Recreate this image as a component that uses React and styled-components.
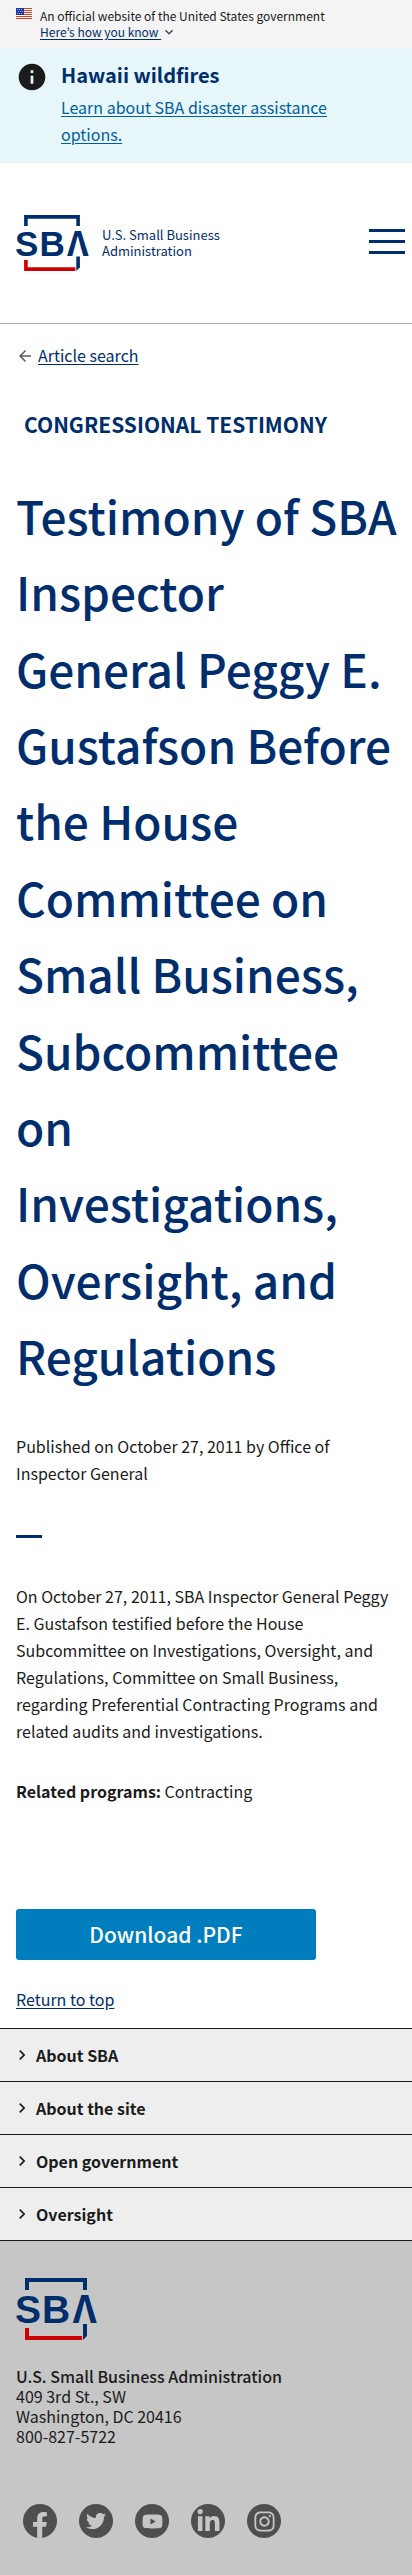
import React from "react";
import styled, { createGlobalStyle } from "styled-components";
import { FaFacebookF, FaTwitter, FaLinkedinIn, FaInstagram, FaYoutube } from "react-icons/fa";

const navy = "#002e6d";
const ink = "#1b1b1b";

const GlobalStyle = createGlobalStyle`
  *, *::before, *::after { box-sizing: border-box; }
  body {
    margin: 0;
    background: #fff;
    color: ${ink};
    font-family: "Noto Sans CJK KR", "Noto Sans", sans-serif;
    font-size: 16px;
    line-height: 27px;
  }
  h1, h2, p, ul, address { margin: 0; padding: 0; }
  button { font-family: inherit; }
  svg { display: block; flex: none; }
`;

const TextLink = styled.a`
  color: ${(p) => p.$color || navy};
  text-decoration: underline;
  text-underline-offset: 2px;
`;

const GovBanner = styled.section`
  display: flex;
  gap: 8px;
  padding: 8px 16px;
  background: #f4f4f4;
  font-size: 12px;
  line-height: 16px;
`;

const BannerButton = styled.button`
  display: flex;
  align-items: center;
  padding: 0;
  border: 0;
  background: none;
  color: ${navy};
  font-size: 12px;
  line-height: 16px;
  cursor: pointer;
  span { text-decoration: underline; text-underline-offset: 2px; }
`;

const Alert = styled.section`
  display: flex;
  gap: 13px;
  padding: 13px 16px;
  background: #e7f6f8;
`;

const AlertBody = styled.div`
  padding-bottom: 2px;
  max-width: 300px;
`;

const AlertTitle = styled.h2`
  color: ${navy};
  font-size: 20px;
  line-height: 27px;
  font-weight: 700;
  margin-bottom: 6px;
`;

const Header = styled.header`
  display: flex;
  align-items: center;
  justify-content: space-between;
  height: 161px;
  padding: 0 7px 0 16px;
  border-bottom: 1px solid #a9aeb1;
`;

const Brand = styled.a`
  display: flex;
  align-items: center;
  gap: 14px;
  color: ${navy};
  font-size: 13px;
  line-height: 16px;
  text-decoration: none;
`;

const MenuButton = styled.button`
  display: flex;
  flex-direction: column;
  gap: 8px;
  width: 36px;
  padding: 0 0 4px;
  border: 0;
  background: none;
  cursor: pointer;
`;

const MenuBar = styled.span`
  height: 3px;
  background: ${navy};
`;

const Main = styled.main`
  padding: 18px 16px 15px;
`;

const BackLink = styled.nav`
  display: flex;
  align-items: center;
  gap: 4px;
`;

const Kicker = styled.h2`
  margin: 39px 0 0;
  padding: 0 8px;
  color: ${navy};
  font-size: 21px;
  line-height: 32px;
  font-weight: 700;
  text-transform: uppercase;
`;

const Title = styled.h1`
  margin: 37px -8px 40px 0;
  color: ${navy};
  font-size: 46px;
  line-height: 1.66;
  font-weight: 500;
`;

const Divider = styled.hr`
  width: 26px;
  height: 3px;
  margin: 48px 0 45px;
  border: 0;
  background: ${navy};
`;

const Related = styled.p`
  margin: 33px 0 104px;
  strong { font-weight: 700; }
`;

const DownloadLink = styled.a`
  display: block;
  max-width: 300px;
  margin-bottom: 26px;
  padding: 12px;
  border-radius: 3px;
  background: #007dbc;
  color: #fff;
  font-size: 21px;
  line-height: 27px;
  font-weight: 500;
  text-align: center;
  text-decoration: none;
`;

const FooterSection = styled.button`
  display: flex;
  align-items: center;
  gap: 4px;
  width: 100%;
  padding: 12px;
  border: 0;
  border-top: 1px solid ${ink};
  background: #eee;
  color: ${ink};
  font-size: 16px;
  line-height: 28px;
  font-weight: 700;
  text-align: left;
  cursor: pointer;
`;

const FooterInfo = styled.section`
  padding: 37px 16px;
  border-top: 1px solid ${ink};
  background: #c6c6c6;
  address { margin: 26px 0 58px; font-style: normal; line-height: 20px; }
  strong { font-weight: 500; display: block; }
`;

const Socials = styled.ul`
  display: flex;
  gap: 22px;
  padding: 0 7px;
  list-style: none;
`;

const SocialLink = styled.a`
  display: flex;
  align-items: center;
  justify-content: center;
  width: 34px;
  height: 34px;
  border-radius: 50%;
  overflow: hidden;
  background: #4f4f4f;
  color: #c6c6c6;
  svg { margin-top: ${(p) => p.$drop || 0}px; }
`;

const LogoArt = styled.svg`
  overflow: visible;
`;

const Icon = ({ size, color, d }) => (
  <svg width={size} height={size} viewBox="0 0 24 24" fill={color} aria-hidden="true">
    <path d={d} />
  </svg>
);

const Flag = () => (
  <svg width="16" height="11" viewBox="0 0 16 11" aria-label="U.S. flag" role="img">
    <rect width="16" height="11" fill="#fff" />
    {[0, 2, 4, 6, 8, 10].map((y) => (
      <rect key={y} y={y} width="16" height="1" fill="#db3e1f" />
    ))}
    <rect width="8" height="7" fill="#1e33b1" />
    {[1, 3, 5].map((y) => [1, 3, 5].map((x) => (
      <rect key={`${x}-${y}`} x={x + (y === 3 ? 1 : 0)} y={y} width="1" height="1" fill="#a5afdc" />
    )))}
  </svg>
);

const Logo = ({ width, height }) => (
  <LogoArt width={width} height={height} viewBox="0 0 80 62" role="img" aria-label="SBA">
    <path d="M11 12V2H69V12" fill="none" stroke={navy} strokeWidth="4" />
    <path d="M11 50V60H66" fill="none" stroke="#cc0000" strokeWidth="4" />
    <path d="M67 46H71V58L67 62Z" fill={navy} />
    <g fill={navy} fontFamily="Liberation Sans, sans-serif" fontWeight="700" fontSize="39">
      <text x="-1" y="45">S</text>
      <text x="26" y="45">B</text>
      <text x="57" y="45" fontFamily="Noto Sans CJK KR, sans-serif" fontSize="38">Λ</text>
    </g>
  </LogoArt>
);

const sections = ["About SBA", "About the site", "Open government", "Oversight"];

const socials = [
  { name: "Facebook", Glyph: FaFacebookF, size: 26, drop: 8 },
  { name: "Twitter", Glyph: FaTwitter, size: 20 },
  { name: "YouTube", Glyph: FaYoutube, size: 21 },
  { name: "LinkedIn", Glyph: FaLinkedinIn, size: 25 },
  { name: "Instagram", Glyph: FaInstagram, size: 23 },
];

export default function App() {
  return (
    <>
      <GlobalStyle />
      <GovBanner>
        <Flag />
        <div>
          <p>An official website of the United States government</p>
          <BannerButton type="button">
            <span>Here’s how you know&nbsp;</span>
            <Icon size={16} color="#3d4551" d="M16.59 8.59 12 13.17 7.41 8.59 6 10l6 6 6-6z" />
          </BannerButton>
        </div>
      </GovBanner>
      <Alert>
        <Icon size={32} color={ink} d="M12 2C6.48 2 2 6.48 2 12s4.48 10 10 10 10-4.48 10-10S17.52 2 12 2zm1 15h-2v-6h2v6zm0-8h-2V7h2v2z" />
        <AlertBody>
          <AlertTitle>Hawaii wildfires</AlertTitle>
          <TextLink href="#disaster" $color="#005ea2">Learn about SBA disaster assistance options.</TextLink>
        </AlertBody>
      </Alert>
      <Header>
        <Brand href="#home">
          <Logo width={72} height={56} />
          <span>U.S. Small Business<br />Administration</span>
        </Brand>
        <MenuButton type="button" aria-label="Menu">
          <MenuBar /><MenuBar /><MenuBar />
        </MenuButton>
      </Header>
      <Main id="top">
        <BackLink>
          <Icon size={18} color="#565c65" d="M20 11H7.83l5.59-5.59L12 4l-8 8 8 8 1.41-1.41L7.83 13H20v-2z" />
          <TextLink href="#articles">Article search</TextLink>
        </BackLink>
        <Kicker>Congressional Testimony</Kicker>
        <Title>
          Testimony of SBA Inspector General Peggy E. Gustafson Before the House Committee on
          Small Business, Subcommittee on Investigations, Oversight, and Regulations
        </Title>
        <p>Published on October 27, 2011 by Office of Inspector General</p>
        <Divider />
        <p>
          On October 27, 2011, SBA Inspector General Peggy E. Gustafson testified before the House
          Subcommittee on Investigations, Oversight, and Regulations, Committee on Small Business,
          regarding Preferential Contracting Programs and related audits and investigations.
        </p>
        <Related><strong>Related programs:</strong> Contracting</Related>
        <DownloadLink href="#pdf">Download .PDF</DownloadLink>
        <TextLink href="#top">Return to top</TextLink>
      </Main>
      <footer>
        <nav>
          {sections.map((label) => (
            <FooterSection type="button" key={label}>
              <Icon size={20} color={ink} d="M10 6 8.59 7.41 13.17 12l-4.58 4.59L10 18l6-6z" />
              {label}
            </FooterSection>
          ))}
        </nav>
        <FooterInfo>
          <Logo width={80} height={62} />
          <address>
            <strong>U.S. Small Business Administration</strong>
            409 3rd St., SW<br />Washington, DC 20416<br />800-827-5722
          </address>
          <Socials>
            {socials.map(({ name, Glyph, size, drop }) => (
              <li key={name}>
                <SocialLink href={`#${name.toLowerCase()}`} aria-label={name} $drop={drop}>
                  <Glyph size={size} />
                </SocialLink>
              </li>
            ))}
          </Socials>
        </FooterInfo>
      </footer>
    </>
  );
}
